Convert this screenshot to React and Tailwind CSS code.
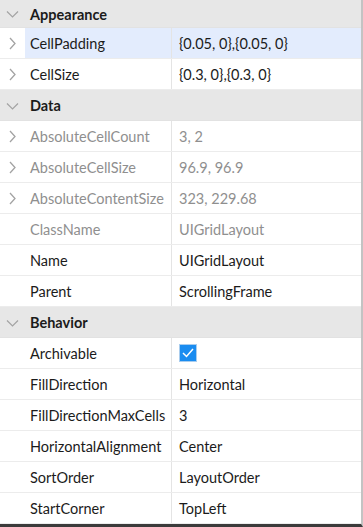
import React from "react";

const Chevron = ({ down }) => (
  <svg width="13" height="13" viewBox="0 0 13 13" className="text-[#a3a3a3]">
    {down ? (
      <path d="M1 4.5 L6.5 10 L12 4.5" fill="none" stroke="currentColor" strokeWidth="1.2" />
    ) : (
      <path d="M4 1 L9 6.5 L4 12" fill="none" stroke="currentColor" strokeWidth="1.3" />
    )}
  </svg>
);

const Header = ({ title, h = "h-[31px]" }) => (
  <div className={`flex items-center ${h} bg-[#e7e7e7] border-b border-[#e2e2e2]`}>
    <div className="w-[25px] flex justify-center">
      <Chevron down />
    </div>
    <div className="pl-[5px] pt-[2px] font-bold text-[#1b1b1b]">{title}</div>
  </div>
);

const Row = ({ name, value, chevron, dim, hover, check }) => (
  <div className="flex h-[31px] border-b border-[#ececec] bg-white">
    <div className="w-[25px] flex items-center justify-center shrink-0">
      {chevron && <Chevron />}
    </div>
    <div className={`flex flex-1 ${hover ? "bg-[#e3ecfd]" : ""}`}>
      <div
        className={`w-[147px] flex items-center pl-[5px] pt-[2px] border-r border-[#e4e4e4] whitespace-nowrap ${
          dim ? "text-[#8f8f8f]" : "text-[#1b1b1b]"
        }`}
      >
        {name}
      </div>
      <div
        className={`flex-1 flex items-center pl-[7px] whitespace-nowrap ${
          check ? "" : "pt-[2px]"
        } ${dim ? "text-[#8f8f8f]" : "text-[#1b1b1b]"}`}
      >
        {check ? (
          <div className="w-[18px] h-[18px] bg-[#1a8cf0] border border-[#a9cdee] flex items-center justify-center">
            <svg width="14" height="14" viewBox="0 0 14 14">
              <path d="M2 7 L5.5 10.5 L12 3" fill="none" stroke="white" strokeWidth="1.5" />
            </svg>
          </div>
        ) : (
          value
        )}
      </div>
    </div>
  </div>
);

export default function App() {
  return (
    <div
      className="w-[363px] h-[527px] bg-white flex flex-col overflow-hidden text-[14.5px] border-r-[2px] border-r-[#c3c3c3] border-b-[3px] border-b-[#3b3b3b]"
      style={{ fontFamily: "Lato, 'Open Sans', sans-serif" }}
    >
      <Header title="Appearance" h="h-[28px]" />
      <Row name="CellPadding" value="{0.05, 0},{0.05, 0}" chevron hover />
      <Row name="CellSize" value="{0.3, 0},{0.3, 0}" chevron />
      <Header title="Data" />
      <Row name="AbsoluteCellCount" value="3, 2" chevron dim />
      <Row name="AbsoluteCellSize" value="96.9, 96.9" chevron dim />
      <Row name="AbsoluteContentSize" value="323, 229.68" chevron dim />
      <Row name="ClassName" value="UIGridLayout" dim />
      <Row name="Name" value="UIGridLayout" />
      <Row name="Parent" value="ScrollingFrame" />
      <Header title="Behavior" />
      <Row name="Archivable" check />
      <Row name="FillDirection" value="Horizontal" />
      <Row name="FillDirectionMaxCells" value="3" />
      <Row name="HorizontalAlignment" value="Center" />
      <Row name="SortOrder" value="LayoutOrder" />
      <Row name="StartCorner" value="TopLeft" />
    </div>
  );
}
